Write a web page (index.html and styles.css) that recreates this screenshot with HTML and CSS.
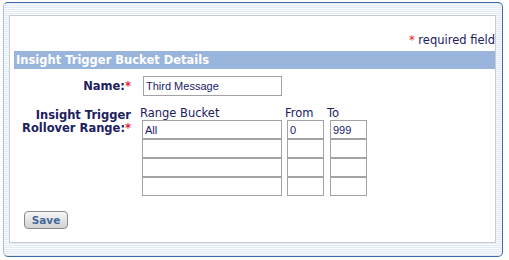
FILE: index.html
```html
<!DOCTYPE html>
<html>
<head>
<meta charset="utf-8">
<link rel="stylesheet" href="styles.css">
</head>
<body>
<div class="frame">
  <div class="panel">
    <div class="req"><span class="star">*</span> required field</div>
    <div class="bar">Insight Trigger Bucket Details</div>
    <div class="row name-row">
      <div class="label">Name:<span class="star">*</span></div>
      <input class="txt name-in" type="text" value="Third Message">
    </div>
    <div class="row range-row">
      <div class="label two">Insight Trigger<br>Rollover Range:<span class="star">*</span></div>
      <div class="grid">
        <div class="hd">Range Bucket</div><div class="hd">From</div><div class="hd">To</div>
        <input class="txt" type="text" value="All"><input class="txt" type="text" value="0"><input class="txt" type="text" value="999">
        <input class="txt" type="text"><input class="txt" type="text"><input class="txt" type="text">
        <input class="txt" type="text"><input class="txt" type="text"><input class="txt" type="text">
        <input class="txt" type="text"><input class="txt" type="text"><input class="txt" type="text">
      </div>
    </div>
    <div class="actions"><button class="btn">Save</button></div>
  </div>
</div>
</body>
</html>
```
FILE: styles.css
```css
html, body { margin: 0; padding: 0; background: #fff; }
body { font-family: "DejaVu Sans", Verdana, sans-serif; font-size: 11.5px; color: #20205f; }
.frame {
  margin: 2px 0 0 3px;
  width: 500px;
  height: 255px;
  box-sizing: border-box;
  border: 1px solid #3a6aa8;
  border-left-color: #a9bfdc;
  border-radius: 5px;
  padding: 12px 6px 14px 5px;
  background: repeating-linear-gradient(to bottom, #e2eaf5 0 1px, #f9fbfd 1px 2px);
}
.panel {
  box-sizing: border-box;
  height: 228px;
  background: #fff;
  border: 1px solid #c4ccd6;
  padding: 18px 0 0 4px;
}
.req { text-align: right; line-height: 13px; padding-right: 0; }
.star { color: #f0202a; }
.bar {
  margin-top: 4px;
  height: 18px;
  line-height: 18px;
  background: #9ab5dc;
  color: #fff;
  font-weight: bold;
  padding-left: 2px;
}
.row { display: flex; }
.label {
  width: 117px;
  text-align: right;
  font-weight: bold;
  margin-right: 11px;
  line-height: 13px;
  white-space: nowrap;
}
.name-row { margin-top: 7px; align-items: center; }
.txt {
  box-sizing: border-box;
  height: 19px;
  margin: 0;
  border: 1px solid #a3a3a3;
  padding: 0 2px;
  font-family: "Liberation Sans", Arial, sans-serif;
  font-size: 11px;
  color: #1a1a6b;
  background: #fff;
  outline: none;
}
.name-in { width: 139px; height: 20px; margin-left: 1px; }
.range-row { margin-top: 11px; }
.label.two { padding-top: 2px; }
.grid {
  display: grid;
  grid-template-columns: 140px 37px 38px;
  column-gap: 5px;
}
.grid .hd { line-height: 13px; margin-left: -2px; }
.grid > input:nth-child(3n) { margin-left: 1px; }
.actions { margin-top: 15px; padding-left: 10px; }
.btn {
  width: 44px;
  height: 18px;
  padding: 0;
  border: 1px solid #8a8a8a;
  border-radius: 4px;
  background: linear-gradient(to bottom, #f6f6f6, #d2d2d2);
  font-family: "DejaVu Sans", Verdana, sans-serif;
  font-size: 10.5px;
  font-weight: bold;
  color: #45679a;
}
```
